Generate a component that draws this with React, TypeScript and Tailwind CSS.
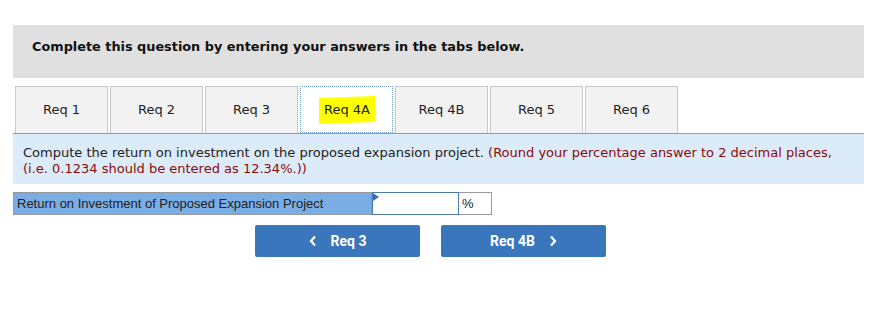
import React from "react";

const tabs = ["Req 1", "Req 2", "Req 3", "Req 4A", "Req 4B", "Req 5", "Req 6"];

export default function App() {
  return (
    <div className="w-[884px] h-[335px] bg-white overflow-hidden relative" style={{ fontFamily: '"DejaVu Sans", Verdana, sans-serif' }}>
      <div className="pt-[25px] pl-[13px]">
        <div className="w-[851px] h-[53px] bg-[#e0e0e0] pl-[19px] pt-[14px]">
          <div className="text-[12.85px] leading-[16px] font-bold text-[#111]">Complete this question by entering your answers in the tabs below.</div>
        </div>

        <div className="mt-[8px] w-[851px] flex pl-[2px] gap-[2px] border-b border-[#999]">
          {tabs.map((t, i) => {
            const active = i === 3;
            return (
              <div
                key={t}
                className={
                  active
                    ? "w-[93px] h-[47px] -mb-px bg-white outline outline-1 outline-dotted outline-[#6b9ad2] -outline-offset-1 flex items-center justify-center text-[13px] text-[#222] relative z-10"
                    : "w-[93px] h-[47px] bg-[#f2f2f2] border border-b-0 border-[#c8c8c8] flex items-center justify-center text-[13px] text-[#222]"
                }
              >
                {active ? (
                  <span className="bg-[#ffff00] px-[5px] py-[3px] -skew-y-2 inline-block">
                    <span className="inline-block skew-y-2">{t}</span>
                  </span>
                ) : (
                  t
                )}
              </div>
            );
          })}
        </div>

        <div className="w-[851px] h-[50px] bg-[#dbebf9] pl-[10px] pt-[11px] text-[13px] leading-[16px] text-[#222]">
          Compute the return on investment on the proposed expansion project.{" "}
          <span className="text-[#8b0a0a]">
            (Round your percentage answer to 2 decimal places,
            <br />
            (i.e. 0.1234 should be entered as 12.34%.))
          </span>
        </div>

        <div className="mt-[8px] flex h-[23px]" style={{ fontFamily: '"Liberation Sans", Arial, sans-serif' }}>
          <div className="w-[359px] h-[23px] bg-[#7aade4] border border-[#999] pl-[3px] text-[13px] leading-[21px] text-[#222]">
            Return on Investment of Proposed Expansion Project
          </div>
          <div className="w-[87px] h-[23px] bg-white border border-[#4d79ae] relative">
            <div className="absolute left-0 top-0 w-0 h-0 border-t-[4px] border-b-[4px] border-l-[6px] border-t-transparent border-b-transparent border-l-[#3b6fb5]" />
          </div>
          <div className="w-[33px] h-[23px] bg-white border border-l-0 border-[#999] pl-[3px] text-[13px] leading-[21px] text-[#222]">%</div>
        </div>

        <div className="mt-[10px] flex gap-[21px] pl-[242px]" style={{ fontFamily: 'Roboto, "Liberation Sans", sans-serif' }}>
          <button className="w-[165px] h-[32px] bg-[#3a76bb] rounded-[2px] text-white font-bold text-[14px] flex items-center justify-center gap-[14px]">
            <svg width="8" height="12" viewBox="0 0 8 12"><path d="M6 1.5 L2 6 L6 10.5" stroke="white" strokeWidth="2.2" fill="none" /></svg>
            <span>Req 3</span>
          </button>
          <button className="w-[165px] h-[32px] bg-[#3a76bb] rounded-[2px] text-white font-bold text-[14px] flex items-center justify-center gap-[14px]">
            <span>Req 4B</span>
            <svg width="8" height="12" viewBox="0 0 8 12"><path d="M2 1.5 L6 6 L2 10.5" stroke="white" strokeWidth="2.2" fill="none" /></svg>
          </button>
        </div>
      </div>
    </div>
  );
}
